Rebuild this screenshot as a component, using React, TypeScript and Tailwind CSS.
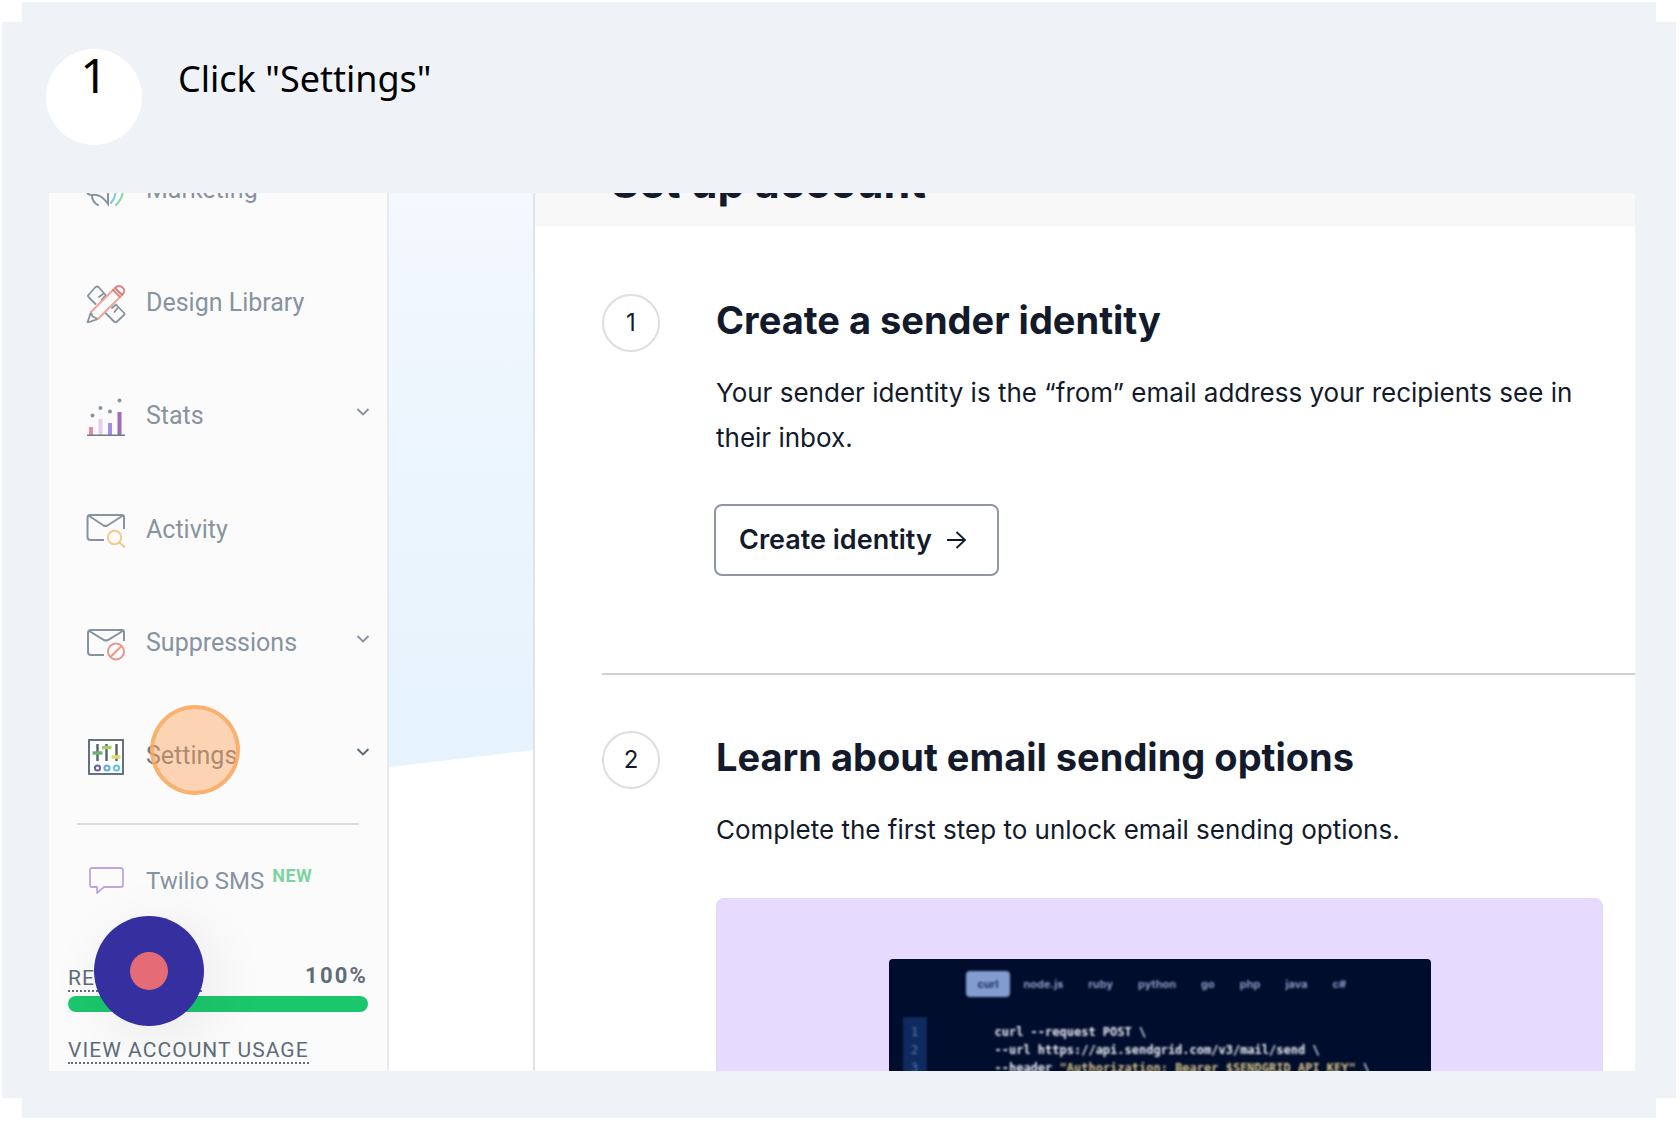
import React from "react";

const slate = "#8793a1";

function MarketingIcon() {
  return (
    <svg viewBox="0 0 40 40" className="size-10 shrink-0" fill="none" stroke={slate} strokeWidth="2" strokeLinecap="round">
      <path d="M1 21c0 3 2 4 5 4 7-1 11 2 16 9V8L8 14c-4 1-7 3-7 7z" />
      <path d="M6 25c0 5 2 8 6 10" />
      <path d="M27 12c4 7 3 15-2 21" stroke="#7fc4e8" />
      <path d="M35 9c4 10 2 19-5 26" stroke="#84d9a4" />
    </svg>
  );
}

function DesignIcon() {
  return (
    <svg viewBox="0 0 40 40" className="size-10 shrink-0" fill="none" strokeWidth="1.800" strokeLinejoin="round" strokeLinecap="round">
      <g stroke={slate}>
        <path d="M9.500 21 2.500 14q-1-1 0-2l7-8q2-1 3 0l8 9M13 14l4-3M15.500 17l3-3.500M19.500 30l9 9q1 1 2 0l7.500-7q1-1 0-2l-8-8.500M26 25l3.500-3M28.500 29l3-4" />
        <path d="M5 29 1.500 39.500 12 36M5 29l1.500 4.500 5.500 2.500" />
      </g>
      <path d="M5 29 29 5l7 7L12 36" stroke="#f0a391" />
      <path d="M29 5q4-4 8 0 3 3-1 7zM27 7l7 7" stroke="#d98583" />
    </svg>
  );
}

function StatsIcon() {
  return (
    <svg viewBox="0 0 40 40" className="size-10 shrink-0">
      <rect x="3" y="31" width="4" height="8" fill="#f283a0" />
      <rect x="12.500" y="23" width="4" height="16" fill="#e6cdef" />
      <rect x="22" y="27" width="4" height="12" fill="#9f90e6" />
      <rect x="31.500" y="16" width="4" height="23" fill="#a06bb8" />
      <rect x="1" y="38.500" width="38" height="1.500" fill="#707b8d" />
      <g fill={slate}>
        <circle cx="6.500" cy="19.500" r="2" />
        <circle cx="14.500" cy="12" r="2" />
        <circle cx="24" cy="15.500" r="2" />
        <circle cx="33.500" cy="4.500" r="2" />
      </g>
    </svg>
  );
}

function ActivityIcon() {
  return (
    <svg viewBox="0 0 40 40" className="size-10 shrink-0" fill="none" strokeWidth="2" stroke={slate}>
      <path d="M38 19V7q0-2-2-2H4Q1.500 5 1.500 8v19q0 3 3 3H18M2.500 5.500l15 10q2 1 4 0L37 5.500" />
      <g stroke="#f5c88b">
        <circle cx="28.500" cy="27.500" r="6.700" />
        <path d="m33 32 6 5.500" />
      </g>
    </svg>
  );
}

function SuppressionsIcon() {
  return (
    <svg viewBox="0 0 40 40" className="size-10 shrink-0" fill="none" strokeWidth="2" stroke={slate}>
      <path d="M38 18V9q0-2-2-2H5Q2 7 2 10v19q0 3 3 3h13M2.500 7.500 18 17q2 1 4 0L37.500 7.500" />
      <g stroke="#ea958c">
        <circle cx="30" cy="28.500" r="8" />
        <path d="M24.500 34 35.500 23" />
      </g>
    </svg>
  );
}

function SettingsIcon() {
  return (
    <svg viewBox="0 0 40 40" className="size-10 shrink-0" fill="none">
      <rect x="3" y="4" width="34" height="34" fill="#fff" stroke="#56636f" strokeWidth="1.800" />
      <path d="M11.500 8v17M20.500 8v17M30.500 8v17" stroke="#56636f" strokeWidth="2.400" />
      <path d="M6.500 17h10" stroke="#6fb56c" strokeWidth="3.500" />
      <path d="M16 11.500h9.500" stroke="#a3cc6b" strokeWidth="3.500" />
      <path d="M25.500 21h9" stroke="#d6df69" strokeWidth="3.500" />
      <g strokeWidth="2">
        <circle cx="11.500" cy="32" r="2.600" stroke="#6262a4" />
        <circle cx="21" cy="32" r="2.600" stroke="#64a9e8" />
        <circle cx="30.500" cy="32" r="2.600" stroke="#62c3dc" />
      </g>
    </svg>
  );
}

function SmsIcon() {
  return (
    <svg viewBox="0 0 40 40" className="size-10 shrink-0" fill="none">
      <path d="M6 7h28q3 0 3 2v15q0 2-2 2H18l-7 6v-6H5.500Q4 26 4 24V9q0-2 2-2z" stroke="#bfa6df" strokeWidth="1.800" strokeLinejoin="round" />
    </svg>
  );
}

function Chevron({ dark }: { dark?: boolean }) {
  return (
    <svg viewBox="0 0 14 10" className="mb-2 ml-auto h-2.5 w-3.5" fill="none">
      <path d="m1.500 2 5.500 5.500L12.500 2" stroke={dark ? "#5b6875" : slate} strokeWidth="1.900" />
    </svg>
  );
}

type Item = { label: string; icon: React.ReactNode; chevron?: boolean; active?: boolean };

const items: Item[] = [
  { label: "Marketing", icon: <MarketingIcon /> },
  { label: "Design Library", icon: <DesignIcon /> },
  { label: "Stats", icon: <StatsIcon />, chevron: true },
  { label: "Activity", icon: <ActivityIcon /> },
  { label: "Suppressions", icon: <SuppressionsIcon />, chevron: true },
  { label: "Settings", icon: <SettingsIcon />, chevron: true, active: true },
];

function Sidebar() {
  return (
    <aside className="w-[340px] shrink-0 border-r-2 border-[#e6eaee] bg-[#fbfbfb] font-['Roboto',sans-serif] text-[#8793a1]">
      <nav className="-mt-[60px] flex h-[680px] flex-col">
        {items.map((it) => (
          <button key={it.label} type="button" className="flex flex-1 items-center pr-[17px] pl-[37px] text-left">
            {it.icon}
            <span className={it.active ? "relative ml-5 text-[25px] leading-8 text-[#6b7784]" : "ml-5 text-[25px] leading-8"}>
              {it.label}
              {it.active && (
                <span className="absolute -top-[35px] left-1 size-[90px] rounded-full border-4 border-[#f9a75f]/80 bg-[#ffa55a]/45" />
              )}
            </span>
            {it.chevron && <Chevron dark={it.active} />}
          </button>
        ))}
      </nav>
      <hr className="mt-2.5 mr-7 ml-7 border-t-2 border-[#d9dbde]" />
      <button type="button" className="mt-9 flex w-full items-center pl-[37px] text-left">
        <SmsIcon />
        <span className="ml-5 text-2xl leading-8">Twilio SMS</span>
        <span className="mb-2.5 ml-2 text-lg leading-5 font-bold tracking-wide text-[#7dd3a1]">NEW</span>
      </button>
      <div className="relative mt-[63px] pr-[19px] pl-[19px] text-[#5f6d7a]">
        <div className="flex items-end justify-between">
          <a href="#reputation" className="border-b-2 border-dotted border-[#5f6d7a] text-[21px] leading-6 tracking-wider">
            REPUTATION
          </a>
          <span className="pb-1 text-[22px] leading-6 font-bold tracking-widest">100%</span>
        </div>
        <div className="mt-1 h-4 rounded-full bg-[#1bc76c]" />
        <a href="#usage" className="mt-[26px] inline-block border-b-2 border-dotted border-[#5f6d7a] text-[21px] leading-6 tracking-wider whitespace-nowrap">
          VIEW ACCOUNT USAGE
        </a>
        <button
          type="button"
          aria-label="Record"
          className="absolute -top-12 left-[45px] flex size-[110px] items-center justify-center rounded-full bg-[#362fa0] shadow-[10px_10px_60px_rgba(0,0,0,0.08)]"
        >
          <span className="size-[38px] rounded-full bg-[#e56c76]" />
        </button>
      </div>
    </aside>
  );
}

function Step({ n, title, text, children }: { n: number; title: string; text: string; children: React.ReactNode }) {
  return (
    <section className="flex items-start">
      <div className="flex size-[58px] shrink-0 items-center justify-center rounded-full border-2 border-[#dcdfe2] text-2xl">{n}</div>
      <div className="ml-14 min-w-0 flex-1 pr-8">
        <h2 className="text-[38px] leading-[52px] font-bold">{title}</h2>
        <p className="mt-6 text-[26px] leading-[45px]">{text}</p>
        {children}
      </div>
    </section>
  );
}

const tabs = ["node.js", "ruby", "python", "go", "php", "java", "c#"];

function CodeCard() {
  return (
    <div className="mt-[46px] flex h-[240px] justify-center rounded-lg border border-[#e2daf0] bg-[#e6dafe] pt-[60px]">
      <div className="w-[542px] rounded-sm bg-[#010d2c] text-xs">
        <div className="flex items-center gap-[25px] pt-3 pl-[77px] text-[11px] font-bold text-[#8b9cc6] blur-[1px]">
          <button type="button" className="-mr-3 rounded-sm bg-[#839ccf] px-3 leading-[26px] text-[#1b2f63]">curl</button>
          {tabs.map((t) => (
            <button key={t} type="button">{t}</button>
          ))}
        </div>
        <div className="mt-5 flex font-['DejaVu_Sans_Mono',monospace] leading-[18px] font-bold blur-[1px]">
          <div className="ml-3.5 w-6 bg-[#0e2a5e] pt-1.5 text-center font-normal text-[#5b77b3]">
            <div>1</div>
            <div>2</div>
            <div>3</div>
          </div>
          <pre className="ml-[68px] pt-1.5 font-['DejaVu_Sans_Mono',monospace] text-[#e9edf7]">
            {"curl --request POST \\\n--url https://api.sendgrid.com/v3/mail/send \\\n--header "}
            <span className="text-[#dcc58a]">"Authorization: Bearer $SENDGRID_API_KEY"</span>
            {" \\"}
          </pre>
        </div>
      </div>
    </div>
  );
}

export default function App() {
  return (
    <div className="bg-white pt-0.5 pr-1 pb-1 pl-0.5 font-['Inter',sans-serif]">
      <div className="bg-[#eff3f8] pt-[47px] pr-[41px] pb-[47px] pl-[47px] [clip-path:polygon(20px_0,calc(100%_-_20px)_0,calc(100%_-_20px)_20px,100%_20px,100%_calc(100%_-_20px),calc(100%_-_20px)_calc(100%_-_20px),calc(100%_-_20px)_100%,20px_100%,20px_calc(100%_-_20px),0_calc(100%_-_20px),0_20px,20px_20px)]">
        <header className="flex items-start pb-12 font-['Noto_Sans',sans-serif] text-black">
          <div className="-ml-[3px] size-24 rounded-full bg-white text-center text-5xl leading-[52px]">1</div>
          <h1 className="ml-9 text-4xl leading-[60px]">Click "Settings"</h1>
        </header>
        <div className="flex aspect-[1586/878] overflow-hidden bg-white">
          <Sidebar />
          <div className="w-36 shrink-0">
            <div className="h-[574px] bg-linear-to-b from-[#f4f8ff] via-[#ebf5fd] to-[#e6f2fc] [clip-path:polygon(0_0,100%_0,100%_557px,0_100%)]" />
          </div>
          <main className="min-w-0 flex-1 border-l-2 border-[#e0e4ea] text-[#121a2b]">
            <div className="flex h-[33px] items-end bg-[#f8f8f8] pb-[18px] pl-[76px]">
              <h2 className="text-[43px] leading-[52px] font-bold">Set up account</h2>
            </div>
            <div className="pt-[68px] pl-[67px]">
              <Step n={1} title="Create a sender identity" text="Your sender identity is the “from” email address your recipients see in their inbox.">
                <button type="button" className="mt-11 -ml-0.5 flex h-[72px] items-center gap-3 rounded-lg border-2 border-[#8f95a3] px-[23px] text-[27px] font-semibold">
                  Create identity
                  <svg viewBox="0 0 24 24" className="mr-1.5 size-6" fill="none" stroke="currentColor" strokeWidth="1.800">
                    <path d="M3 12h17M12.500 4l8.500 8-8.500 8" />
                  </svg>
                </button>
              </Step>
              <hr className="mt-[97px] mb-14 border-t-2 border-[#cfd1d4]" />
              <Step n={2} title="Learn about email sending options" text="Complete the first step to unlock email sending options.">
                <CodeCard />
              </Step>
            </div>
          </main>
        </div>
      </div>
    </div>
  );
}
